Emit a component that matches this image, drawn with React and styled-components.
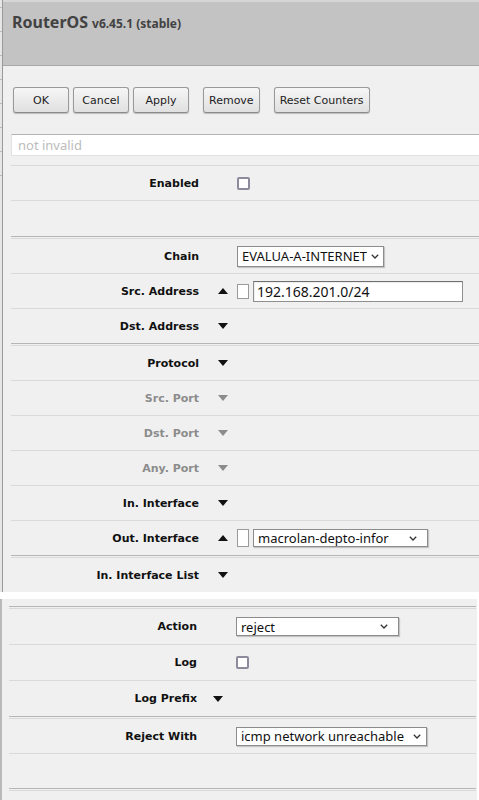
import React from 'react';
import styled, { createGlobalStyle } from 'styled-components';

const Global = createGlobalStyle`
  html, body { margin: 0; padding: 0; background: #ffffff; }
  body { font-family: "DejaVu Sans", Verdana, sans-serif; }
  #root { width: 479px; height: 800px; overflow: hidden; }
`;

const Page = styled.div`
  width: 479px;
  height: 800px;
  display: flex;
  flex-direction: column;
  gap: 7px;
  background: #ffffff;
  overflow: hidden;
`;

const Frame = styled.div`
  display: flex;
  flex: none;
  width: ${p => p.$w}px;
  height: ${p => p.$h}px;
  background: #f0f0f0;
  overflow: hidden;
`;

const SideStrip = styled.div`
  flex: none;
  width: ${p => p.$w}px;
  background: ${p => p.$menu
    ? 'repeating-linear-gradient(to bottom, #e6e6e6 0 7px, #bdbdbd 7px 8px, #e6e6e6 8px 24px) top / 100% 180px no-repeat, #e6e6e6'
    : '#b9b9b9'};
  border-right: ${p => (p.$menu ? '1px solid #9a9a9a' : 'none')};
`;

const Main = styled.div`
  flex: 1;
  min-width: 0;
  display: flex;
  flex-direction: column;
`;

const Header = styled.header`
  flex: none;
  height: 66px;
  box-sizing: border-box;
  border-top: 2px solid #d6d6d6;
  border-bottom: 1px solid #a8a8a8;
  background: #c3c3c3;
  padding: 9px 0 0 9px;
  display: flex;
  align-items: baseline;
  gap: 4px;
  color: #424242;
  font-family: "Noto Sans", "Open Sans", sans-serif;
  font-weight: 700;
`;

const Title = styled.span`
  font-size: 16px;
`;

const Version = styled.span`
  font-size: 12px;
`;

const Toolbar = styled.div`
  display: flex;
  padding: 21px 0 0 10px;
`;

const Button = styled.button`
  flex: none;
  height: 26px;
  min-width: 56px;
  margin: 0 0 0 ${p => p.$before || 0}px;
  padding: 0 5px;
  box-sizing: border-box;
  border: 1px solid #999999;
  border-bottom-color: #8a8a8a;
  border-radius: 3px;
  background: linear-gradient(#f6f6f6, #e0e0e0);
  box-shadow: 0 1px 1px rgba(0, 0, 0, 0.22);
  font: 11px "DejaVu Sans", Verdana, sans-serif;
  color: #222222;
`;

const Filter = styled.input`
  display: block;
  margin: 21px 0 9px 8px;
  width: calc(100% - 8px);
  height: 22px;
  box-sizing: border-box;
  border: 1px solid #e2e2e2;
  border-top-color: #b4b4b4;
  border-right: none;
  background: #ffffff;
  padding: 0 0 0 6px;
  font: 13px "Noto Sans", "Open Sans", sans-serif;
  color: #333;
  outline: none;
  &::placeholder { color: #bcbcbc; }
`;

const Form = styled.div`
  margin-left: ${p => p.$left}px;
  margin-right: ${p => p.$right || 0}px;
`;

const Tail = styled.div`
  height: ${p => p.$h}px;
`;

const Section = styled.div`
  border-top: ${p => (p.$first ? 'none' : '1px solid #b6b6b6')};
  padding-top: ${p => (p.$first ? 0 : 1)}px;
`;

const Row = styled.div`
  display: grid;
  grid-template-columns: 188px ${p => p.$arrowCol}px 1fr;
  align-items: center;
  height: ${p => p.$h}px;
  box-sizing: border-box;
  border-top: 1px solid #d9d9d9;
`;

const Label = styled.div`
  text-align: right;
  font: bold 11px "DejaVu Sans", Verdana, sans-serif;
  color: ${p => (p.$disabled ? '#8c8c8c' : '#111111')};
  white-space: nowrap;
`;

const ArrowCell = styled.div`
  display: flex;
  align-items: center;
  padding-left: ${p => p.$pad}px;
`;

const Controls = styled.div`
  display: flex;
  align-items: center;
  gap: 4px;
`;

const Checkbox = styled.span`
  display: block;
  width: 13px;
  height: 13px;
  box-sizing: border-box;
  border: 2px solid #8d8a9b;
  border-radius: 2px;
  background: #ffffff;
`;

const NegBox = styled.span`
  display: block;
  width: 12px;
  height: ${p => p.$h}px;
  box-sizing: border-box;
  border: 1px solid #9a9a9a;
  background: #ffffff;
`;

const TextInput = styled.div`
  width: ${p => p.$w}px;
  height: 21px;
  box-sizing: border-box;
  border: 1px solid #8f8f8f;
  border-top-color: #6f6f6f;
  background: #ffffff;
  box-shadow: inset 1px 1px 1px rgba(0, 0, 0, 0.08);
  padding-left: 3px;
  display: flex;
  align-items: center;
  font: 14px "Noto Sans", "Open Sans", sans-serif;
  color: #111111;
`;

const Select = styled.div`
  width: ${p => p.$w}px;
  height: ${p => p.$h}px;
  box-sizing: border-box;
  border: 1px solid #8c8c8c;
  background: #ffffff;
  box-shadow: 1px 1px 1px rgba(0, 0, 0, 0.18);
  padding: 0 ${p => p.$pr}px 0 4px;
  display: flex;
  align-items: center;
  gap: 2px;
  font: 13px "Noto Sans", "Open Sans", sans-serif;
  color: #111111;
  overflow: hidden;
`;

const SelectText = styled.span`
  flex: 0 1 auto;
  white-space: nowrap;
  overflow: hidden;
`;

const Chevron = styled.svg`
  flex: none;
  margin-left: auto;
`;

const ChevronIcon = () => (
  <Chevron width="8" height="5" viewBox="0 0 8 5">
    <polyline points="0.8,0.8 4,4 7.2,0.8" fill="none" stroke="#333" strokeWidth="1.3" />
  </Chevron>
);

const Arrow = ({ up, disabled }) => (
  <svg width="10" height="6" viewBox="0 0 10 6">
    <polygon
      points={up ? '0,6 10,6 5,0' : '0,0 10,0 5,6'}
      fill={disabled ? '#8c8c8c' : '#111'}
    />
  </svg>
);

const Field = ({ label, arrow, disabled, h = 35, arrowCol = 38, arrowPad = 19, children }) => (
  <Row $h={h} $arrowCol={arrowCol}>
    <Label $disabled={disabled}>{label}</Label>
    <ArrowCell $pad={arrowPad}>
      {arrow && <Arrow up={arrow === 'up'} disabled={disabled} />}
    </ArrowCell>
    <Controls>{children}</Controls>
  </Row>
);

export default function App() {
  return (
    <Page>
      <Global />
      <Frame $w={479} $h={592}>
        <SideStrip $w={2} $menu />
        <Main>
          <Header>
            <Title>RouterOS</Title>
            <Version>v6.45.1 (stable)</Version>
          </Header>
          <Toolbar>
            <Button>OK</Button>
            <Button $before={4}>Cancel</Button>
            <Button $before={4}>Apply</Button>
            <Button $before={14}>Remove</Button>
            <Button $before={14}>Reset Counters</Button>
          </Toolbar>
          <Filter placeholder="not invalid" readOnly />
          <Form $left={8}>
            <Section $first>
              <Field label="Enabled">
                <Checkbox />
              </Field>
              <Field label="" h={36} />
            </Section>
            <Section>
              <Field label="Chain">
                <Select $w={147} $h={21} $pr={4}>
                  <SelectText>EVALUA-A-INTERNET</SelectText>
                  <ChevronIcon />
                </Select>
              </Field>
              <Field label="Src. Address" arrow="up">
                <NegBox $h={15} />
                <TextInput $w={210}>192.168.201.0/24</TextInput>
              </Field>
              <Field label="Dst. Address" arrow="down" />
            </Section>
            <Section>
              <Field label="Protocol" arrow="down" />
              <Field label="Src. Port" arrow="down" disabled />
              <Field label="Dst. Port" arrow="down" disabled />
              <Field label="Any. Port" arrow="down" disabled />
              <Field label="In. Interface" arrow="down" />
              <Field label="Out. Interface" arrow="up">
                <NegBox $h={18} />
                <Select $w={175} $h={18} $pr={10}>
                  <SelectText>macrolan-depto-infor</SelectText>
                  <ChevronIcon />
                </Select>
              </Field>
            </Section>
            <Section>
              <Field label="In. Interface List" arrow="down" />
            </Section>
          </Form>
        </Main>
      </Frame>
      <Frame $w={477} $h={201}>
        <SideStrip $w={2} />
        <Main>
          <Form $left={7} $right={1}>
            <Tail $h={7} />
            <Section>
              <Field label="Action" h={36} arrowCol={39} arrowPad={16}>
                <Select $w={163} $h={19} $pr={10}>
                  <SelectText>reject</SelectText>
                  <ChevronIcon />
                </Select>
              </Field>
              <Field label="Log" h={36} arrowCol={39} arrowPad={16}>
                <Checkbox />
              </Field>
              <Field label="Log Prefix" arrow="down" h={36} arrowCol={39} arrowPad={16} />
            </Section>
            <Section>
              <Field label="Reject With" h={35} arrowCol={39} arrowPad={16}>
                <Select $w={191} $h={19} $pr={5}>
                  <SelectText>icmp network unreachable</SelectText>
                  <ChevronIcon />
                </Select>
              </Field>
              <Field label="" h={35} arrowCol={39} arrowPad={16} />
            </Section>
            <Section>
              <Field label="" h={35} arrowCol={39} arrowPad={16} />
            </Section>
          </Form>
        </Main>
      </Frame>
    </Page>
  );
}
